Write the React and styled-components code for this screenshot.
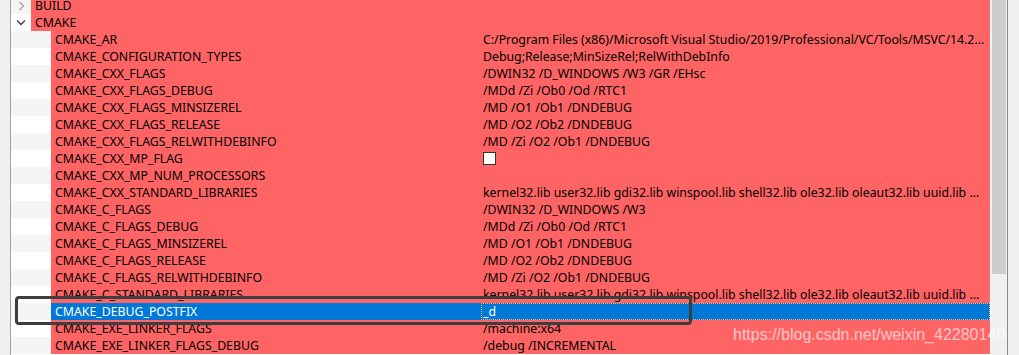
import React from "react";
import styled, { createGlobalStyle } from "styled-components";

const GlobalStyle = createGlobalStyle`
  html, body {
    margin: 0;
    padding: 0;
    background: #f0f0f0;
    overflow: hidden;
  }
  body {
    font-family: "Noto Sans", "Noto Sans CJK SC", sans-serif;
    font-size: 12.3px;
    color: #000;
  }
`;

const groups = [
  { name: "BUILD", open: false, items: [] },
  {
    name: "CMAKE",
    open: true,
    items: [
      ["CMAKE_AR", "C:/Program Files (x86)/Microsoft Visual Studio/2019/Professional/VC/Tools/MSVC/14.28.29333/bin/Hostx64/x64/lib.exe"],
      ["CMAKE_CONFIGURATION_TYPES", "Debug;Release;MinSizeRel;RelWithDebInfo"],
      ["CMAKE_CXX_FLAGS", "/DWIN32 /D_WINDOWS /W3 /GR /EHsc"],
      ["CMAKE_CXX_FLAGS_DEBUG", "/MDd /Zi /Ob0 /Od /RTC1"],
      ["CMAKE_CXX_FLAGS_MINSIZEREL", "/MD /O1 /Ob1 /DNDEBUG"],
      ["CMAKE_CXX_FLAGS_RELEASE", "/MD /O2 /Ob2 /DNDEBUG"],
      ["CMAKE_CXX_FLAGS_RELWITHDEBINFO", "/MD /Zi /O2 /Ob1 /DNDEBUG"],
      ["CMAKE_CXX_MP_FLAG", false],
      ["CMAKE_CXX_MP_NUM_PROCESSORS", ""],
      ["CMAKE_CXX_STANDARD_LIBRARIES", "kernel32.lib user32.lib gdi32.lib winspool.lib shell32.lib ole32.lib oleaut32.lib uuid.lib comdlg32.lib advapi32.lib"],
      ["CMAKE_C_FLAGS", "/DWIN32 /D_WINDOWS /W3"],
      ["CMAKE_C_FLAGS_DEBUG", "/MDd /Zi /Ob0 /Od /RTC1"],
      ["CMAKE_C_FLAGS_MINSIZEREL", "/MD /O1 /Ob1 /DNDEBUG"],
      ["CMAKE_C_FLAGS_RELEASE", "/MD /O2 /Ob2 /DNDEBUG"],
      ["CMAKE_C_FLAGS_RELWITHDEBINFO", "/MD /Zi /O2 /Ob1 /DNDEBUG"],
      ["CMAKE_C_STANDARD_LIBRARIES", "kernel32.lib user32.lib gdi32.lib winspool.lib shell32.lib ole32.lib oleaut32.lib uuid.lib comdlg32.lib advapi32.lib"],
      ["CMAKE_DEBUG_POSTFIX", "_d", true],
      ["CMAKE_EXE_LINKER_FLAGS", "/machine:x64"],
      ["CMAKE_EXE_LINKER_FLAGS_DEBUG", "/debug /INCREMENTAL"],
    ],
  },
];

function Chevron({ open }) {
  return open ? (
    <svg width="10" height="7" viewBox="0 0 10 7">
      <polyline points="1,1.5 5,5.5 9,1.5" fill="none" stroke="#404040" strokeWidth="1.4" />
    </svg>
  ) : (
    <svg width="7" height="10" viewBox="0 0 7 10">
      <polyline points="1.5,1 5.5,5 1.5,9" fill="none" stroke="#a6a6a6" strokeWidth="1.4" />
    </svg>
  );
}

function Row({ index, depth, name, value, selected, group }) {
  const indent = depth === 0 ? 20 : 40;
  return (
    <StyledRow>
      <Indent $w={indent} $alt={index % 2 === 0}>
        {group && <Chevron open={group.open} />}
      </Indent>
      <Cells $selected={selected}>
        <NameCell $w={469 - indent}>{name}</NameCell>
        <ValueCell $selected={selected}>
          {value === false ? <CheckBox /> : value}
        </ValueCell>
      </Cells>
    </StyledRow>
  );
}

export default function App() {
  let index = 0;
  const rows = [];
  groups.forEach((g) => {
    rows.push(
      <Row key={g.name} index={index++} depth={0} name={g.name} value="" group={g} />
    );
    if (g.open) {
      g.items.forEach(([name, value, selected]) => {
        rows.push(
          <Row
            key={name}
            index={index++}
            depth={1}
            name={name}
            value={value}
            selected={selected}
          />
        );
      });
    }
  });

  return (
    <>
      <GlobalStyle />
      <Window>
        <LeftEdge />
        <TreeView>
          <List>{rows}</List>
        </TreeView>
        <ScrollBar>
          <Thumb />
        </ScrollBar>
        <RightEdge />
        <Highlight />
        <Watermark>https://blog.csdn.net/weixin_42280140</Watermark>
      </Window>
    </>
  );
}

const Window = styled.div`
  position: relative;
  display: flex;
  width: 1019px;
  height: 355px;
  overflow: hidden;
  background: #f0f0f0;
`;

const LeftEdge = styled.div`
  width: 10px;
  flex: 0 0 10px;
  background: #f0f0f0;
  border-right: 1px solid #a0a0a0;
`;

const TreeView = styled.div`
  flex: 1;
  min-width: 0;
  background: #fff;
  overflow: hidden;
`;

const List = styled.div`
  margin-top: -3px;
  display: flex;
  flex-direction: column;
`;

const StyledRow = styled.div`
  display: flex;
  height: 17px;
  line-height: 17px;
  white-space: nowrap;
`;

const Indent = styled.div`
  flex: 0 0 ${(p) => p.$w}px;
  display: flex;
  align-items: center;
  justify-content: center;
  background: ${(p) => (p.$alt ? "#f5f5f5" : "#fff")};
`;

const Cells = styled.div`
  flex: 1;
  min-width: 0;
  display: flex;
  background: ${(p) => (p.$selected ? "#0078d7" : "#ff6464")};
  color: ${(p) => (p.$selected ? "#fff" : "#000")};
`;

const NameCell = styled.div`
  flex: 0 0 ${(p) => p.$w}px;
  padding-left: 4px;
  box-sizing: border-box;
  overflow: hidden;
  text-overflow: ellipsis;
`;

const ValueCell = styled.div`
  flex: 1;
  min-width: 0;
  margin-left: 1px;
  padding-left: 2px;
  padding-right: 5px;
  box-sizing: border-box;
  overflow: hidden;
  text-overflow: ellipsis;
  outline: ${(p) => (p.$selected ? "1px dotted #f7b267" : "none")};
  outline-offset: -1px;
`;

const CheckBox = styled.span`
  display: inline-block;
  vertical-align: -2px;
  width: 13px;
  height: 13px;
  box-sizing: border-box;
  border: 1px solid #333;
  background: #fff;
`;

const ScrollBar = styled.div`
  flex: 0 0 17px;
  background: #f0f0f0;
  padding: 0 1px;
  box-sizing: border-box;
  border-left: 1px solid #fff;
`;

const Thumb = styled.div`
  height: 274px;
  background: #cdcdcd;
`;

const RightEdge = styled.div`
  flex: 0 0 12px;
  box-sizing: border-box;
  border-left: 1px solid #8a8a8a;
  background: #f0f0f0;
`;

const Highlight = styled.div`
  position: absolute;
  left: 15px;
  top: 296px;
  width: 677px;
  height: 29px;
  box-sizing: border-box;
  border: 3px solid #3e3e3e;
  border-radius: 4px;
  pointer-events: none;
`;

const Watermark = styled.div`
  position: absolute;
  left: 733px;
  top: 326px;
  font-family: "Liberation Sans", Arial, sans-serif;
  font-size: 16px;
  color: rgba(255, 255, 255, 0.65);
  white-space: nowrap;
  pointer-events: none;
`;
